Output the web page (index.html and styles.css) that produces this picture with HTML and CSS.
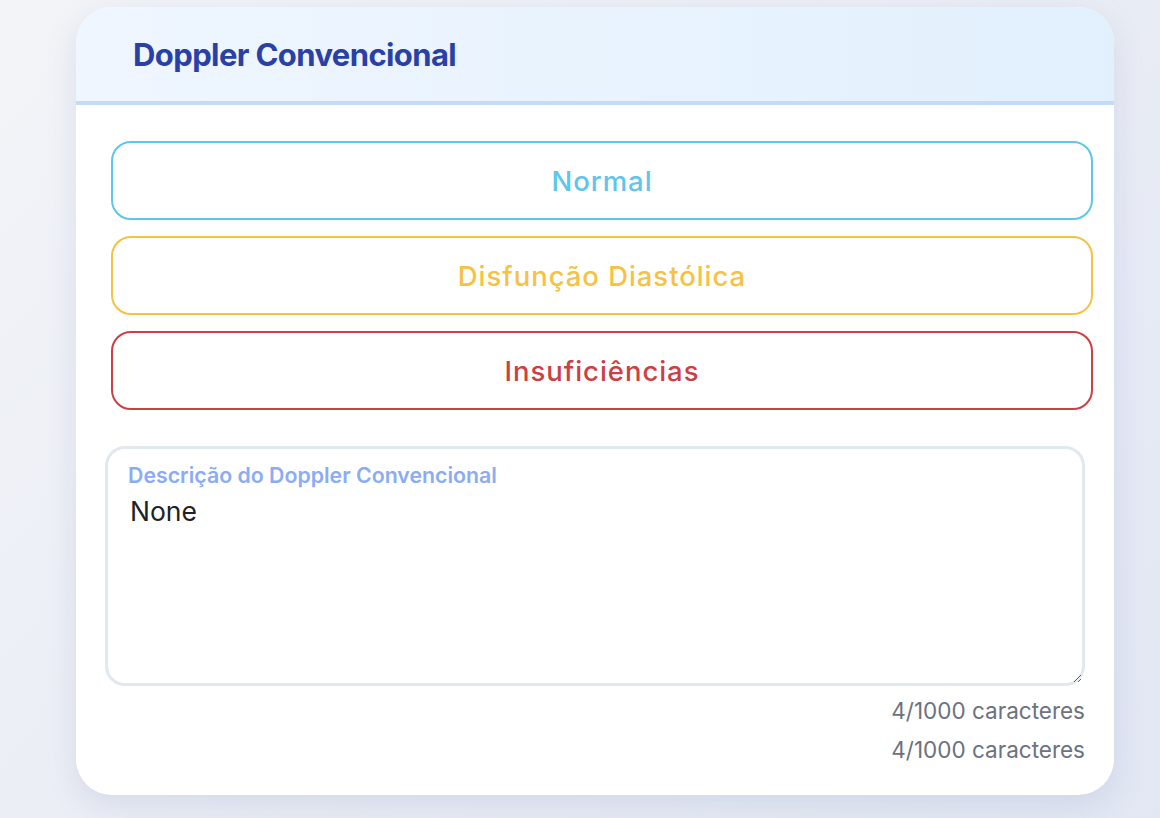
FILE: index.html
```html
<!DOCTYPE html>
<html lang="pt">
<head>
<meta charset="utf-8">
<title>Doppler Convencional</title>
<link rel="stylesheet" href="styles.css">
</head>
<body>
<div class="card">
  <div class="card-header">
    <h2 class="card-title">Doppler Convencional</h2>
  </div>
  <div class="card-body">
    <div class="options">
      <button class="opt opt-normal">Normal</button>
      <button class="opt opt-diast">Disfunção Diastólica</button>
      <button class="opt opt-insuf">Insuficiências</button>
    </div>
    <div class="field">
      <label class="field-label" for="desc">Descrição do Doppler Convencional</label>
      <textarea id="desc" class="field-input">None</textarea>
    </div>
    <div class="counter counter-first">4/1000 caracteres</div>
    <div class="counter">4/1000 caracteres</div>
  </div>
</div>
</body>
</html>
```

FILE: styles.css
```css
html, body {
  margin: 0;
  padding: 0;
}
body {
  width: 1160px;
  height: 818px;
  overflow: hidden;
  font-family: Inter, "Noto Sans", sans-serif;
  background: linear-gradient(135deg, #f2f4f8 0%, #eaedf5 50%, #e2e7f3 100%);
}
.card {
  margin: 7px 0 0 76px;
  width: 1038px;
  height: 788px;
  background: #ffffff;
  border-radius: 36px;
  overflow: hidden;
  box-shadow: 0 10px 30px rgba(120, 135, 180, 0.18);
  box-sizing: border-box;
}
.card-header {
  height: 98px;
  box-sizing: border-box;
  border-bottom: 4px solid #c4dbf8;
  background: linear-gradient(90deg, #eff6ff 0%, #e2f0fd 100%);
  display: flex;
  align-items: center;
  padding: 0 0 0 57px;
}
.card-title {
  margin: 0;
  font-size: 31px;
  font-weight: 700;
  letter-spacing: -0.6px;
  color: #2941a6;
}
.card-body {
  padding: 36px 29px 0 29px;
}
.options {
  display: flex;
  flex-direction: column;
  gap: 16px;
  margin: 0 -8px 0 6px;
}
.opt {
  height: 79px;
  border-radius: 20px;
  background: #ffffff;
  border: 2px solid;
  font-family: Inter, "Noto Sans", sans-serif;
  font-size: 27.5px;
  font-weight: 500;
  letter-spacing: 0.95px;
  cursor: pointer;
  padding: 0;
}
.opt-normal {
  border-color: #5ec6ea;
  color: #5ec6ea;
}
.opt-diast {
  border-color: #f6c244;
  color: #f6c244;
}
.opt-insuf {
  border-color: #cb3f45;
  color: #cb3f45;
}
.field {
  position: relative;
  margin-top: 36px;
}
.field-label {
  position: absolute;
  top: 16px;
  left: 23px;
  font-size: 21.3px;
  font-weight: 600;
  color: #8bacf5;
}
.field-input {
  display: block;
  width: 100%;
  height: 240px;
  box-sizing: border-box;
  border: 3px solid #e2e8f0;
  border-radius: 20px;
  padding: 46px 22px 10px 22px;
  font-family: Inter, "Noto Sans", sans-serif;
  font-size: 26.5px;
  color: #1f2124;
  resize: vertical;
  outline: none;
}
.counter {
  text-align: right;
  font-size: 22.5px;
  color: #6b7280;
  line-height: 39px;
}
.counter-first {
  margin-top: 5px;
}
```
